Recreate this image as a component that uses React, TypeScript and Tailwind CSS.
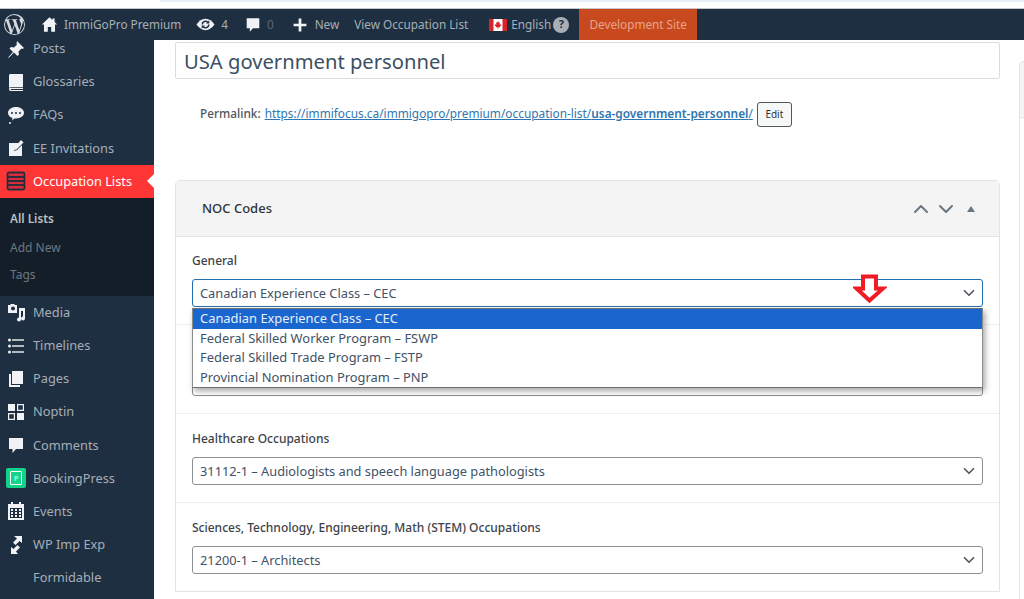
import type { ReactNode } from "react";
import { ChevronDown, ChevronUp } from "lucide-react";

const font = "font-['Noto_Sans',sans-serif]";

// dashicons redrawn by hand, 20x20 box
const icons: { [key: string]: ReactNode } = {
  posts: <path d="M11 2l7 7-1.500 1-1-.5-3 3 .5 3-1.500 1.500-3.500-3.500L3 18.500l-1 .5.5-1 4.500-5L3.500 9.500 5 8l3 .5 3-3-.5-1z" />,
  glossaries: (
    <>
      <path d="M3 3.500C3 2.500 3.700 2 4.500 2H17v13H5c-1.200 0-2 .4-2 1z" />
      <path d="M3 16.500C3 15.600 4 15 5 15.800h12V17H5.500c-.8 0-1 .3-.6 1H17v1H4.500C3.500 19 3 18 3 16.500z" />
    </>
  ),
  faqs: (
    <>
      <path fillRule="evenodd" d="M10 2c4.500 0 8 2.500 8 5.800s-3.500 5.700-8 5.700H8.500L6 15.500l.5-2.500C3.800 12.200 2 10.200 2 7.800 2 4.500 5.500 2 10 2zM6 7a1 1 0 100 2 1 1 0 000-2zm4 0a1 1 0 100 2 1 1 0 000-2zm4 0a1 1 0 100 2 1 1 0 000-2z" />
      <circle cx="4" cy="18" r="1" />
    </>
  ),
  invitations: (
    <>
      <path d="M3 5h10.500L9 10l-1 3 3-1 5-5v11H3z" />
      <path d="M15 2l2.500 2.500-7 7-2.500.5.5-2.500z" />
    </>
  ),
  media: (
    <>
      <path fillRule="evenodd" d="M2 3h2l1-1h3l1 1h2v8H2zm5 1.500a2 2 0 100 4 2 2 0 000-4z" />
      <path d="M13 6h6v10.500a2 2 0 11-2-2V9h-2v8.500a2 2 0 11-2-2z" />
    </>
  ),
  timelines: (
    <>
      <circle cx="3.500" cy="4" r="1.500" />
      <circle cx="3.500" cy="10" r="1.500" />
      <circle cx="3.500" cy="16" r="1.500" />
      <rect x="6" y="3.300" width="12" height="1.400" />
      <rect x="6" y="9.300" width="12" height="1.400" />
      <rect x="6" y="15.300" width="12" height="1.400" />
    </>
  ),
  pages: (
    <>
      <path d="M6 2h11v13H6z" />
      <path d="M3 5h2v11h9v2H3z" />
    </>
  ),
  noptin: (
    <path fillRule="evenodd" d="M2 2h7v7H2zm9 0h7v7h-7zm1.200 1.200v4.600h4.600V3.200zM2 11h7v7H2zm1.200 1.200v4.600h4.600v-4.600zM11 11h7v7h-7z" />
  ),
  comments: <path d="M3 3h14v11h-7l-3.500 4v-4H3z" />,
  events: (
    <path fillRule="evenodd" d="M5 1h2v2h6V1h2v2h3v16H2V3h3zM4 7v10h12V7zm1 1h2v2H5zm4 0h2v2H9zm4 0h2v2h-2zm-8 3h2v2H5zm4 0h2v2H9zm4 0h2v2h-2zm-8 3h2v2H5zm4 0h2v2H9zm4 0h2v2h-2z" />
  ),
  impexp: (
    <>
      <path d="M8 1h8v7l-2.500-2-4 4L7 7.500l4-4z" />
      <path d="M12 19H5v-7l2.500 2 4-4 2.500 2.500-4 4z" />
    </>
  ),
};

const topItems = [
  { label: "Posts", icon: "posts" },
  { label: "Glossaries", icon: "glossaries" },
  { label: "FAQs", icon: "faqs" },
  { label: "EE Invitations", icon: "invitations" },
];

const bottomItems = [
  { label: "Media", icon: "media" },
  { label: "Timelines", icon: "timelines" },
  { label: "Pages", icon: "pages" },
  { label: "Noptin", icon: "noptin" },
  { label: "Comments", icon: "comments" },
  { label: "BookingPress", icon: "booking" },
  { label: "Events", icon: "events" },
  { label: "WP Imp Exp", icon: "impexp" },
  { label: "Formidable", icon: "" },
];

function MenuIcon({ name }: { name: string }) {
  if (name === "booking") {
    return (
      <span className="flex h-5 w-5 items-center justify-center rounded-[2px] bg-[#12d488]">
        <span className="flex h-3.5 w-3 items-center justify-center rounded-[1px] border border-white text-[7px] leading-none text-white">P</span>
      </span>
    );
  }
  if (!name) return <span className="h-5 w-5" />;
  return (
    <svg viewBox="0 0 20 20" className="h-5 w-5 fill-[#f0f2f5]">
      {icons[name]}
    </svg>
  );
}

function MenuRow({ label, icon }: { label: string; icon: string }) {
  return (
    <div className="flex h-[33.2px] items-center gap-[7px] pl-[6px] text-[12.800px] text-[#a7aeb5]">
      <MenuIcon name={icon} />
      <span>{label}</span>
    </div>
  );
}

function Sidebar() {
  return (
    <aside className="relative h-[559px] w-[154px] shrink-0 overflow-hidden bg-[#1e2f42]">
      <div className="-mt-[8px]">
        {topItems.map((i) => (
          <MenuRow key={i.label} label={i.label} icon={i.icon} />
        ))}
      </div>
      <div className="relative flex h-[33px] items-center gap-[7px] bg-[#ff3636] pl-[6px] text-[12.800px] text-white">
        <svg viewBox="0 0 20 20" className="h-5 w-5">
          <rect x="1.500" y="1.500" width="17" height="17" rx="1.500" fill="#d92c36" stroke="#2c2c3c" strokeWidth="1.800" />
          <path d="M2 6h16M2 10h16M2 14h16" stroke="#2c2c3c" strokeWidth="1.800" />
        </svg>
        <span>Occupation Lists</span>
        <span className="absolute right-0 top-[9px] h-0 w-0 border-y-[7px] border-r-[7px] border-y-transparent border-r-white" />
      </div>
      <div className="flex h-[98px] flex-col bg-[#131e29] pl-[10px] pt-[7px] text-[12px] text-[#6f7880]">
        <div className="flex h-[28px] items-center text-[11.800px] font-semibold text-[#bcc0c4]">All Lists</div>
        <div className="flex h-[30px] items-center">Add New</div>
        <div className="flex h-[24px] items-center">Tags</div>
      </div>
      <div>
        {bottomItems.map((i) => (
          <MenuRow key={i.label} label={i.label} icon={i.icon} />
        ))}
      </div>
    </aside>
  );
}

function AdminBar() {
  return (
    <header className="flex h-[31px] items-center bg-[#1e2f42] text-[11.750px] text-[#a7aeb5]">
      <svg viewBox="0 0 20 20" className="ml-[4px] h-[21px] w-[21px] fill-[#d5d9dd]">
        <path fillRule="evenodd" d="M10 0a10 10 0 110 20 10 10 0 010-20zm0 1a9 9 0 00-7.600 4.100h.6c1 0 2.400-.1 2.400-.1.5 0 .6.700.1.800 0 0-.5 0-1 .1l3.300 9.600 2-5.900-1.400-3.700c-.5 0-1-.1-1-.1-.5 0-.4-.8.1-.8 0 0 1.500.1 2.400.1 1 0 2.400-.1 2.400-.1.5 0 .6.700.1.800 0 0-.5 0-1 .1l3.200 9.600.9-3c.4-1.200.700-2.100.700-2.800 0-1-.4-1.800-.7-2.300-.4-.7-.8-1.200-.8-1.900 0-.7.6-1.400 1.300-1.400h.1A9 9 0 0010 1zM1.900 6.300A9 9 0 001 10a9 9 0 005 8.100zM10.200 10.800l-2.700 7.900a9 9 0 005.500-.1zm7.700-5a7 7 0 01.1 1.100c0 .9-.2 1.900-.7 3.200l-2.700 7.900A9 9 0 0017.900 5.800z" />
      </svg>
      <svg viewBox="0 0 20 20" className="ml-[16px] h-[17px] w-[17px] fill-[#f0f2f5]">
        <path d="M10 1.500L1 10h2.500v8.500H8V13h4v5.500h4.500V10H19l-3-2.800V3h-2.500v1.800z" />
      </svg>
      <span className="ml-[6px] pt-[1px]">ImmiGoPro Premium</span>
      {/* lens with the two update arrows cut through it */}
      <svg viewBox="0 0 20 20" className="ml-[15px] h-[19px] w-[19px]">
        <path d="M10 4c3.800 0 7 2.500 9.500 6-2.500 3.500-5.700 6-9.500 6s-7-2.500-9.500-6C3 6.500 6.200 4 10 4z" fill="#f0f2f5" />
        <path d="M6.500 10a3.500 3.500 0 016-2.400M13.500 10a3.500 3.500 0 01-6 2.400" fill="none" stroke="#1e2f42" strokeWidth="1.600" />
        <path d="M14 5.500v3.500h-3.500zM6 14.500V11h3.500z" fill="#1e2f42" />
      </svg>
      <span className="ml-[6px] pt-[1px]">4</span>
      <svg viewBox="0 0 20 20" className="ml-[16px] h-[18px] w-[18px] fill-[#f0f2f5]">
        <path d="M3 2.500h14v11h-7l-3.500 4v-4H3z" />
      </svg>
      <span className="ml-[5px] pt-[1px] text-[#5d6873]">0</span>
      <svg viewBox="0 0 20 20" className="ml-[18px] h-[16px] w-[16px] fill-[#f0f2f5]">
        <path d="M8.300 2h3.400v6.300H18v3.400h-6.300V18H8.300v-6.300H2V8.300h6.300z" />
      </svg>
      <span className="ml-[7px] pt-[1px]">New</span>
      <span className="ml-[15px] pt-[1px]">View Occupation List</span>
      <svg viewBox="0 0 18 12" className="ml-[21px] h-[12px] w-[18px]">
        <rect width="18" height="12" fill="#fff" />
        <rect width="4.500" height="12" fill="#d8232a" />
        <rect x="13.500" width="4.500" height="12" fill="#d8232a" />
        <path d="M9 2l1 1.800 1-.4-.4 2.400 1.400-.6.4 1-1.400 1.200.2.800H9.300V10h-.6V8.200H6.800l.2-.8L5.600 6.200l.4-1 1.400.6L7 3.400l1 .4z" fill="#d8232a" />
      </svg>
      <span className="ml-[4px] pt-[1px]">English</span>
      <span className="ml-[2px] flex h-4 w-4 items-center justify-center rounded-full bg-[#a7aeb5] text-[11px] font-bold text-[#1e2f42]">?</span>
      <div className="ml-[10px] flex h-full w-[118px] items-center justify-center bg-[#c9491e] pt-[1px] text-[#e6a48c]">Development Site</div>
    </header>
  );
}

function FakeSelect({ value, focused }: { value: string; focused?: boolean }) {
  return (
    <div
      className={`flex h-[28px] items-center justify-between rounded-[3px] border pl-[7px] pr-[4px] text-[12.800px] text-[#3f5266] ${
        focused ? "border-[#2271b1]" : "border-[#8c8f94]"
      }`}
    >
      <span className={focused ? "pt-[2px]" : "pt-[1px]"}>{value}</span>
      <ChevronDown size={18} strokeWidth={2.200} className="text-[#50575e]" />
    </div>
  );
}

function Field({ label, value, focused, first }: { label: string; value: string; focused?: boolean; first?: boolean }) {
  return (
    <div className={`px-4 pb-[17px] ${first ? "pt-[14px]" : "border-t border-[#eeeeee] pt-[15px]"}`}>
      <div className="mb-[8px] h-[20px] text-[12px] leading-[20px] font-medium text-[#3c434a]">{label}</div>
      <FakeSelect value={value} focused={focused} />
    </div>
  );
}

const options = [
  "Canadian Experience Class – CEC",
  "Federal Skilled Worker Program – FSWP",
  "Federal Skilled Trade Program – FSTP",
  "Provincial Nomination Program – PNP",
];

export default function App() {
  return (
    <div className={`h-[599px] w-[1024px] overflow-hidden bg-white ${font}`}>
      <div className="h-[9px] border-b border-[#c8c8c8] bg-white">
        <div className="ml-[160px] h-[2px] bg-[#e9edf8]" />
      </div>
      <AdminBar />
      <div className="flex">
        <Sidebar />
        <main className="relative flex h-[559px] flex-1 gap-[19px] overflow-hidden pl-[21px]">
          <div className="w-[825px] shrink-0">
            <div className="mt-[2px] flex h-[37px] items-center rounded-[2px] border border-[#dcdcde] px-[8px] pt-[1px] text-[20.200px] text-[#3c4f63]">
              USA government personnel
            </div>
            <div className="mt-[23px] flex h-[24px] items-center pl-[25px] text-[11.850px] text-[#50575e]">
              <span className="font-medium">Permalink:</span>
              <a className="ml-[4px] text-[#2f76b0] underline">
                https://immifocus.ca/immigopro/premium/occupation-list/<b className="font-semibold">usa-government-personnel</b>/
              </a>
              <button className="ml-[4px] h-[25px] w-[35px] rounded-[3px] border border-[#50575e] bg-[#f6f7f7] text-[10px] text-[#2c3338]">Edit</button>
            </div>
            <section className="mt-[54px] rounded-t-[5px] border border-[#e3e3e3]">
              <div className="flex h-[56px] items-center justify-between border-b border-[#e3e3e3] bg-[#f4f4f4] pl-[26px] pr-[24px]">
                <h2 className="text-[13px] font-medium text-[#2c3338]">NOC Codes</h2>
                <div className="flex items-center gap-[1px] text-[#6b7680]">
                  <ChevronUp size={24} strokeWidth={2} />
                  <ChevronDown size={24} strokeWidth={2} />
                  <span className="ml-[8px] h-0 w-0 border-x-[4px] border-b-[6px] border-x-transparent border-b-[#6b7680]" />
                </div>
              </div>
              <Field first focused label="General" value="Canadian Experience Class – CEC" />
              {/* this field sits behind the open popup, its text can't be seen */}
              <Field label="" value="" />
              <Field label="Healthcare Occupations" value="31112-1 – Audiologists and speech language pathologists" />
              <Field label="Sciences, Technology, Engineering, Math (STEM) Occupations" value="21200-1 – Architects" />
            </section>
          </div>
          {/* side postbox, cut off by the right edge */}
          <div className="mt-[21px] flex-1 rounded-tl-[5px] border-l border-t border-[#e3e3e3]">
            <div className="h-[56px] rounded-tl-[5px] border-b border-[#e3e3e3] bg-[#f4f4f4]" />
          </div>
          {/* native select popup, open over the field */}
          <div className="absolute left-[38px] top-[268px] w-[791px] border-x border-y border-x-[#8c8c8c] border-y-[#6f6f6f] bg-white text-[12.900px] leading-[19.500px] text-[#3f5266] shadow-[2px_3px_6px_rgba(0,0,0,0.35)]">
            {options.map((o, i) => (
              <div key={o} className={`px-[7px] ${i === 0 ? "bg-[#1a66cf] text-[#e8eff9]" : ""}`}>
                {o}
              </div>
            ))}
          </div>
          {/* red annotation arrow */}
          <svg viewBox="0 0 34 30" className="absolute left-[699px] top-[234px] h-[30px] w-[34px]">
            <path d="M10 2.500h13v12h7L16.500 26.500 3.500 14.500H10z" fill="#fff" stroke="#ee1c25" strokeWidth="4" />
          </svg>
        </main>
      </div>
    </div>
  );
}
